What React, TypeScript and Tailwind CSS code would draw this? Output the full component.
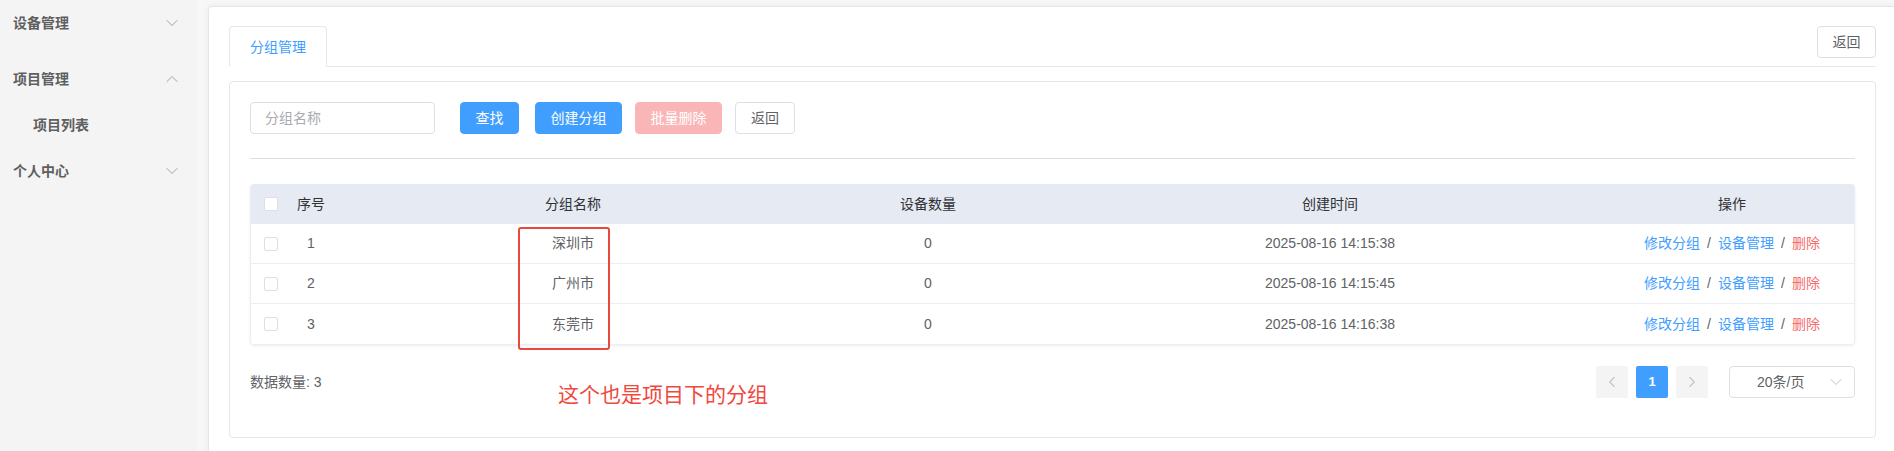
import React from "react";
import { ChevronDown, ChevronUp, ChevronLeft, ChevronRight } from "lucide-react";

const font = { fontFamily: '"Liberation Sans", "Noto Sans CJK SC", Arial, sans-serif' };

function Checkbox() {
  return <div className="w-[14px] h-[14px] border border-[#dcdfe6] rounded-[2px] bg-white" />;
}

const rows = [
  { id: 1, name: "深圳市", count: 0, time: "2025-08-16 14:15:38" },
  { id: 2, name: "广州市", count: 0, time: "2025-08-16 14:15:45" },
  { id: 3, name: "东莞市", count: 0, time: "2025-08-16 14:16:38" },
];

function SideItem({ label, open, sub }: { label: string; open?: boolean; sub?: boolean }) {
  return (
    <div className={`h-[46px] flex items-center justify-between pr-[16px] ${sub ? "pl-[33px]" : "pl-[13px]"}`}>
      <span className="text-[14px] font-bold text-[#5f5f5f]">{label}</span>
      {!sub &&
        (open ? (
          <ChevronUp size={20} strokeWidth={1} color="#909399" />
        ) : (
          <ChevronDown size={20} strokeWidth={1} color="#909399" />
        ))}
    </div>
  );
}

export default function App() {
  return (
    <div className="relative flex w-[1894px] h-[451px] overflow-hidden bg-[#f7f7f7]" style={font}>
      <div className="w-[198px] shrink-0 h-full bg-[#f4f4f4]">
        <SideItem label="设备管理" />
        <div className="h-[10px]" />
        <SideItem label="项目管理" open />
        <SideItem label="项目列表" sub />
        <SideItem label="个人中心" />
      </div>
      <div className="flex-1 pl-[10px] pt-[6px]">
        <div className="w-[1689px] h-[470px] bg-white border border-[#e6e6e6] rounded-[4px] shadow-[0_0_6px_rgba(0,0,0,0.06)] pt-[19px] px-[20px]">
          <div className="flex items-start justify-between h-[41px] border-b border-[#e4e7ed]">
            <div className="h-[41px] px-[20px] border border-[#e4e7ed] border-b-white rounded-t-[4px] text-[#409eff] text-[14px] leading-[40px]">
              分组管理
            </div>
            <button className="h-[32px] w-[59px] border border-[#dcdfe6] rounded-[4px] text-[#606266] text-[14px] bg-white">
              返回
            </button>
          </div>
          <div className="mt-[14px] border border-[#e4e7ed] rounded-[4px] p-[20px] pb-[39px]">
            <div className="flex items-center h-[32px]">
              <div className="w-[185px] h-[32px] border border-[#dcdfe6] rounded-[4px] flex items-center pl-[14px] text-[14px] text-[#a8abb2]">
                分组名称
              </div>
              <button className="ml-[25px] h-[32px] w-[59px] rounded-[4px] bg-[#409eff] border border-[#409eff] text-white text-[14px]">
                查找
              </button>
              <button className="ml-[16px] h-[32px] w-[87px] rounded-[4px] bg-[#409eff] border border-[#409eff] text-white text-[14px]">
                创建分组
              </button>
              <button className="ml-[13px] h-[32px] w-[87px] rounded-[4px] bg-[#fab6b6] border border-[#fab6b6] text-white text-[14px]">
                批量删除
              </button>
              <button className="ml-[13px] h-[32px] w-[60px] rounded-[4px] bg-white border border-[#dcdfe6] text-[#606266] text-[14px]">
                返回
              </button>
            </div>
            <div className="mt-[24px] h-px bg-[#dcdfe6]" />
            <div className="mt-[25px] rounded-[4px] border border-[#ebeef5] border-t-0 overflow-hidden shadow-[0_1px_3px_rgba(0,0,0,0.08)]">
              <div className="flex h-[40px] items-center bg-[#e5eaf3] text-[14px] text-[#303133]">
                <div className="w-[39px] flex justify-center"><Checkbox /></div>
                <div className="w-[42px] text-center">序号</div>
                <div className="w-[482px] text-center">分组名称</div>
                <div className="w-[228px] text-center">设备数量</div>
                <div className="w-[576px] text-center">创建时间</div>
                <div className="w-[228px] text-center">操作</div>
              </div>
              {rows.map((r) => (
                <div key={r.id} className="flex h-[40px] items-center border-b border-[#ebeef5] last:border-b-0 text-[14px] text-[#606266] bg-white">
                  <div className="w-[39px] flex justify-center"><Checkbox /></div>
                  <div className="w-[42px] text-center">{r.id}</div>
                  <div className="w-[482px] text-center">{r.name}</div>
                  <div className="w-[228px] text-center">{r.count}</div>
                  <div className="w-[576px] text-center">{r.time}</div>
                  <div className="w-[228px] flex justify-center">
                    <span className="text-[#409eff]">修改分组</span>
                    <span className="mx-[7px]">/</span>
                    <span className="text-[#409eff]">设备管理</span>
                    <span className="mx-[7px]">/</span>
                    <span className="text-[#f56c6c]">删除</span>
                  </div>
                </div>
              ))}
            </div>
            <div className="mt-[21px] h-[32px] flex items-center justify-between">
              <span className="text-[14px] text-[#606266]">数据数量: 3</span>
              <div className="flex items-center">
                <div className="w-[32px] h-[32px] rounded-[2px] bg-[#f4f4f5] flex items-center justify-center">
                  <ChevronLeft size={18} strokeWidth={1.5} color="#c0c4cc" />
                </div>
                <div className="ml-[8px] w-[32px] h-[32px] rounded-[2px] bg-[#409eff] flex items-center justify-center text-white text-[13px] font-bold">
                  1
                </div>
                <div className="ml-[8px] w-[32px] h-[32px] rounded-[2px] bg-[#f4f4f5] flex items-center justify-center">
                  <ChevronRight size={18} strokeWidth={1.5} color="#c0c4cc" />
                </div>
                <div className="ml-[21px] w-[126px] h-[32px] border border-[#dcdfe6] rounded-[4px] flex items-center justify-between pl-[27px] pr-[8px] text-[14px] text-[#606266]">
                  <span>20条/页</span>
                  <ChevronDown size={20} strokeWidth={1.2} color="#c0c4cc" />
                </div>
              </div>
            </div>
          </div>
        </div>
      </div>
      <div className="absolute left-[518px] top-[227px] w-[92px] h-[123px] border-2 border-[#e8483d] rounded-[3px]" />
      <div className="absolute left-[558px] top-[382px] text-[21px] leading-[26px] text-[#f0483e]">这个也是项目下的分组</div>
    </div>
  );
}
